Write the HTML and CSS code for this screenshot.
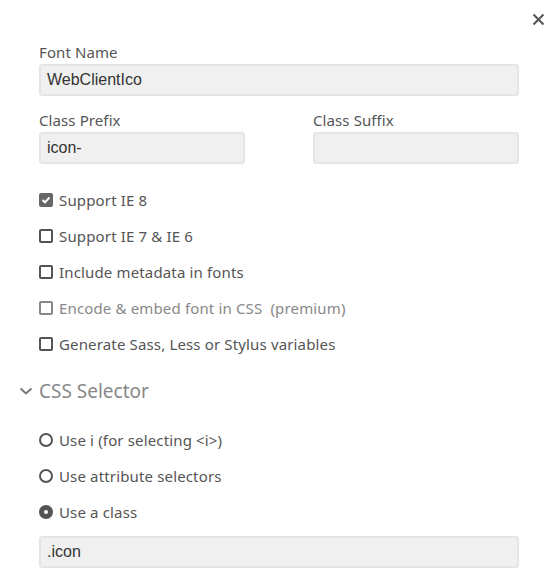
FILE: index.html
```html
<!DOCTYPE html>
<html>
<head>
<meta charset="utf-8">
<link rel="stylesheet" href="styles.css">
</head>
<body>
<div class="dialog">
  <button class="close" aria-label="Close">
    <svg width="13" height="13" viewBox="0 0 13 13"><path d="M1.5 1.5 L11.5 11.5 M11.5 1.5 L1.5 11.5" stroke="#555" stroke-width="2" fill="none"/></svg>
  </button>
  <div class="form">
    <div class="field">
      <label class="label">Font Name</label>
      <div class="input">WebClientIco</div>
    </div>
    <div class="row">
      <div class="field half">
        <label class="label">Class Prefix</label>
        <div class="input">icon-</div>
      </div>
      <div class="field half">
        <label class="label">Class Suffix</label>
        <div class="input"></div>
      </div>
    </div>
    <ul class="options">
      <li class="opt"><span class="box checked"><svg width="10" height="8" viewBox="0 0 10 8"><path d="M1.5 4 L4 6.3 L8.5 1.5" stroke="#fff" stroke-width="2" fill="none"/></svg></span>Support IE 8</li>
      <li class="opt"><span class="box"></span>Support IE 7 &amp; IE 6</li>
      <li class="opt"><span class="box"></span>Include metadata in fonts</li>
      <li class="opt disabled"><span class="box"></span>Encode &amp; embed font in CSS&nbsp; (premium)</li>
      <li class="opt"><span class="box"></span>Generate Sass, Less or Stylus variables</li>
    </ul>
    <div class="section">
      <svg class="chev" width="14" height="8" viewBox="0 0 14 8"><path d="M1.5 1.5 L7 6.5 L12.5 1.5" stroke="#777" stroke-width="2" fill="none"/></svg>
      <span>CSS Selector</span>
    </div>
    <ul class="options radios">
      <li class="opt"><span class="radio"></span>Use i (for selecting &lt;i&gt;)</li>
      <li class="opt"><span class="radio"></span>Use attribute selectors</li>
      <li class="opt"><span class="radio checked"></span>Use a class</li>
    </ul>
    <div class="input wide">.icon</div>
  </div>
</div>
</body>
</html>
```
FILE: styles.css
```css
html, body {
  margin: 0;
  padding: 0;
  background: #fff;
}
body {
  font-family: "Noto Sans", "Open Sans", sans-serif;
  color: #555;
}
.dialog {
  position: relative;
  width: 559px;
  height: 585px;
}
.close {
  position: absolute;
  top: 13px;
  right: 14px;
  width: 13px;
  height: 13px;
  padding: 0;
  border: 0;
  background: none;
  display: flex;
}
.form {
  padding: 42px 40px 0 39px;
  width: 480px;
}
.label {
  display: block;
  font-size: 15px;
  line-height: 20px;
  margin-bottom: 2px;
  color: #555;
  letter-spacing: 0.1px;
}
.field {
  margin-bottom: 14px;
}
.row {
  display: flex;
  justify-content: space-between;
}
.half {
  width: 206px;
  margin-bottom: 0;
}
.input {
  box-sizing: border-box;
  height: 32px;
  background: #f0f0f0;
  border: 2px solid #e5e5e5;
  border-radius: 3px;
  font-family: "Liberation Sans", Arial, sans-serif;
  font-size: 16px;
  line-height: 28px;
  padding: 0 6px;
  color: #333;
}
.options {
  list-style: none;
  margin: 18px 0 0;
  padding: 0;
}
.opt {
  display: flex;
  align-items: center;
  height: 36px;
  font-size: 15px;
  letter-spacing: 0.15px;
  color: #555;
}
.opt.disabled {
  color: #888;
}
.box {
  box-sizing: border-box;
  width: 14px;
  height: 14px;
  border: 2px solid #555;
  border-radius: 2px;
  margin-right: 6px;
  display: flex;
  align-items: center;
  justify-content: center;
  flex: none;
}
.opt.disabled .box {
  border-color: #888;
}
.box.checked {
  background: #666;
  border-color: #666;
}
.section {
  display: flex;
  align-items: center;
  height: 30px;
  margin: 14px 0 0 -20px;
  font-size: 19px;
  color: #888;
}
.chev {
  margin-right: 6px;
}
.radios {
  margin-top: 16px;
}
.radio {
  box-sizing: border-box;
  width: 14px;
  height: 14px;
  border: 2px solid #555;
  border-radius: 50%;
  margin-right: 6px;
  position: relative;
  flex: none;
}
.radio.checked {
  background: #555;
}
.radio.checked::after {
  content: "";
  position: absolute;
  left: 3px;
  top: 3px;
  width: 4px;
  height: 4px;
  border-radius: 50%;
  background: #fff;
}
.wide {
  margin-top: 6px;
}
```
